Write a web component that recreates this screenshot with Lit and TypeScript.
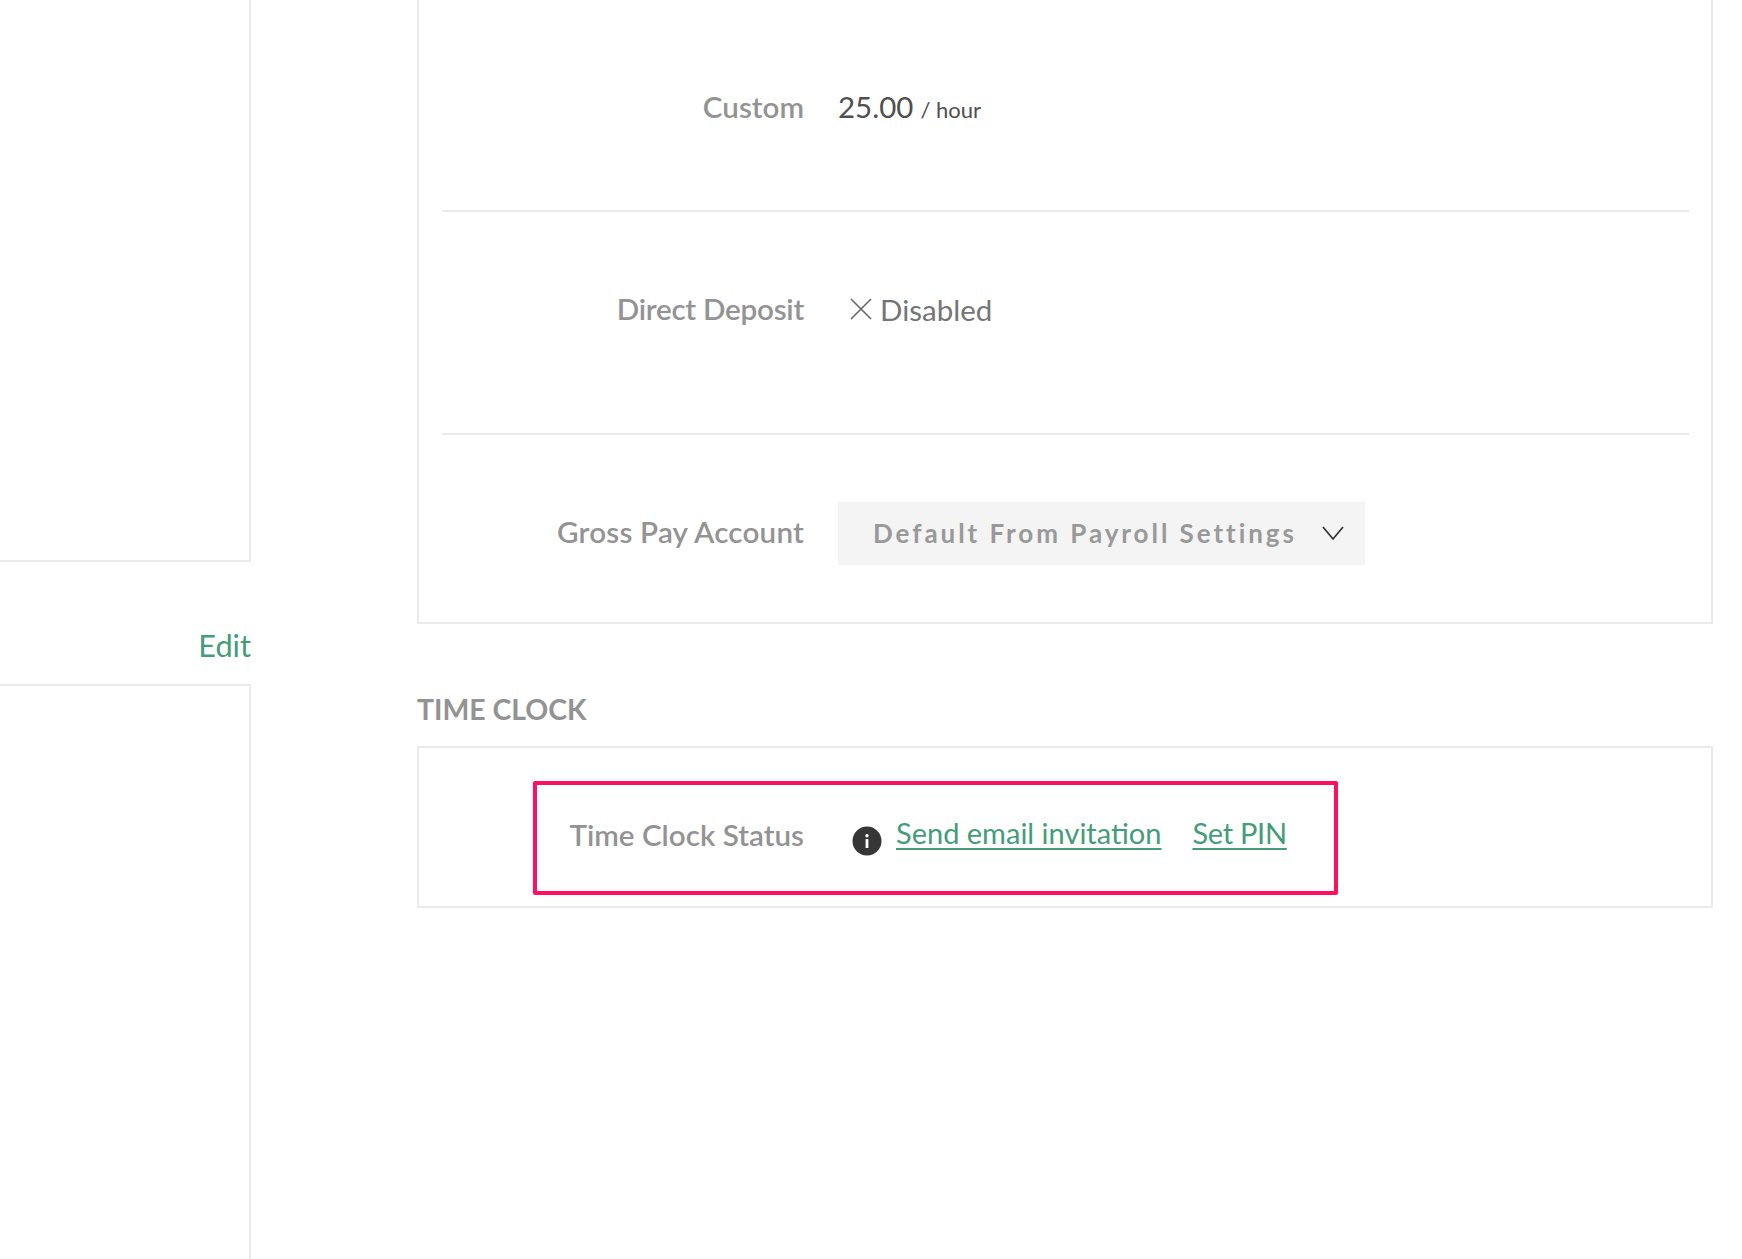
import { LitElement, html, css } from "lit";
import { customElement } from "lit/decorators.js";

@customElement("app-root")
export class AppRoot extends LitElement {
  static styles = css`
    :host { display: block; width: 1742px; height: 1259px; overflow: hidden; background: #fff;
      font-family: Lato, "Open Sans", sans-serif; color: #939393; }
    * { box-sizing: border-box; }
    .page { display: grid; grid-template-columns: 251px 1296px; column-gap: 166px; height: 1259px; }
    .left { display: flex; flex-direction: column; }
    .lp { border: 2px solid #ebebeb; border-left: 0; }
    .lp.a { height: 562px; border-top: 0; }
    .lp.b { flex: 1; border-bottom: 0; }
    .editrow { height: 122px; display: flex; align-items: center; justify-content: flex-end; padding-top: 44px;
      font-size: 30.7px; font-weight: 400; color: #449c79; }
    .right { display: flex; flex-direction: column; }
    .panel { border: 2px solid #ebebeb; }
    .panel.main { height: 624px; border-top: 0; display: flex; flex-direction: column; padding: 0 22px 0 23px; }
    .row { display: grid; grid-template-columns: 362px 1fr; column-gap: 34px; align-items: center; }
    .row.r1 { height: 210px; padding-top: 3px; }
    .row.r2 { height: 223px; border-top: 2px solid #ebebeb; padding-bottom: 27px; }
    .row.r3 { flex: 1; border-top: 2px solid #ebebeb; align-items: start; padding-top: 67px; }
    .label { text-align: right; font-size: 29.6px; font-weight: 600; color: #939393; line-height: 1; }
    .r2 .label { letter-spacing: -0.25px; }
    .r3 .label { line-height: 59px; letter-spacing: 0.2px; }
    .val { display: flex; align-items: baseline; color: #4f4f4f; font-size: 29.5px; font-weight: 400; }
    .unit { font-size: 22px; margin-left: 7px; }
    .dis { display: flex; align-items: center; gap: 7px; color: #757575; font-size: 29.5px; padding-left: 11px; }
    .dis svg { display: block; }
    .select { width: 527px; height: 63px; background: #f4f4f4; display: flex; align-items: center; justify-content: space-between;
      padding: 0 19px 2px 35px; font-size: 26px; font-weight: 700; letter-spacing: 2.95px; color: #999; }
    .heading { margin: 0; height: 122px; display: flex; align-items: center; padding-top: 48px; font-size: 28.4px; font-weight: 700; color: #939393; }
    .panel.tc { height: 162px; padding: 33px 0 0 114px; }
    .hl { width: 805px; height: 114px; border: 4px solid #ff0f5f; border-radius: 2px; display: flex; align-items: center; padding: 0 0 4px 30px; }
    .hl .label { width: 237px; flex: none; margin-top: -2px; }
    .info { flex: none; margin: 9px 0 0 48px; display: block; }
    .links { display: flex; gap: 31px; margin-left: 14px; margin-top: -7px; font-size: 29px; font-weight: 400; }
    .links a { color: #449c79; text-decoration: underline; text-underline-offset: 4px; text-decoration-thickness: 2px; }
    .links a.pin { letter-spacing: -0.3px; }
  `;

  render() {
    return html`
      <div class="page">
        <div class="left">
          <div class="lp a"></div>
          <div class="editrow"><span>Edit</span></div>
          <div class="lp b"></div>
        </div>
        <div class="right">
          <div class="panel main">
            <div class="row r1">
              <div class="label">Custom</div>
              <div class="val">25.00<span class="unit">/ hour</span></div>
            </div>
            <div class="row r2">
              <div class="label">Direct Deposit</div>
              <div class="dis">
                <svg width="24" height="24" viewBox="0 0 24 24"><path d="M2 2L22 22M22 2L2 22" stroke="#666" stroke-width="1.6" fill="none"/></svg>
                <span>Disabled</span>
              </div>
            </div>
            <div class="row r3">
              <div class="label">Gross Pay Account</div>
              <div class="select">
                <span>Default From Payroll Settings</span>
                <svg width="26" height="16" viewBox="0 0 26 16"><path d="M3 2L13 14L23 2" stroke="#333" stroke-width="1.7" fill="none"/></svg>
              </div>
            </div>
          </div>
          <h2 class="heading">TIME CLOCK</h2>
          <div class="panel tc">
            <div class="hl">
              <div class="label">Time Clock Status</div>
              <svg class="info" width="30" height="30" viewBox="0 0 30 30">
                <circle cx="15" cy="15" r="14.5" fill="#363636"/>
                <rect x="13.6" y="13" width="2.8" height="9" fill="#fff"/>
                <circle cx="15" cy="9.8" r="1.7" fill="#fff"/>
              </svg>
              <div class="links"><a>Send email invitation</a><a class="pin">Set PIN</a></div>
            </div>
          </div>
        </div>
      </div>
    `;
  }
}
